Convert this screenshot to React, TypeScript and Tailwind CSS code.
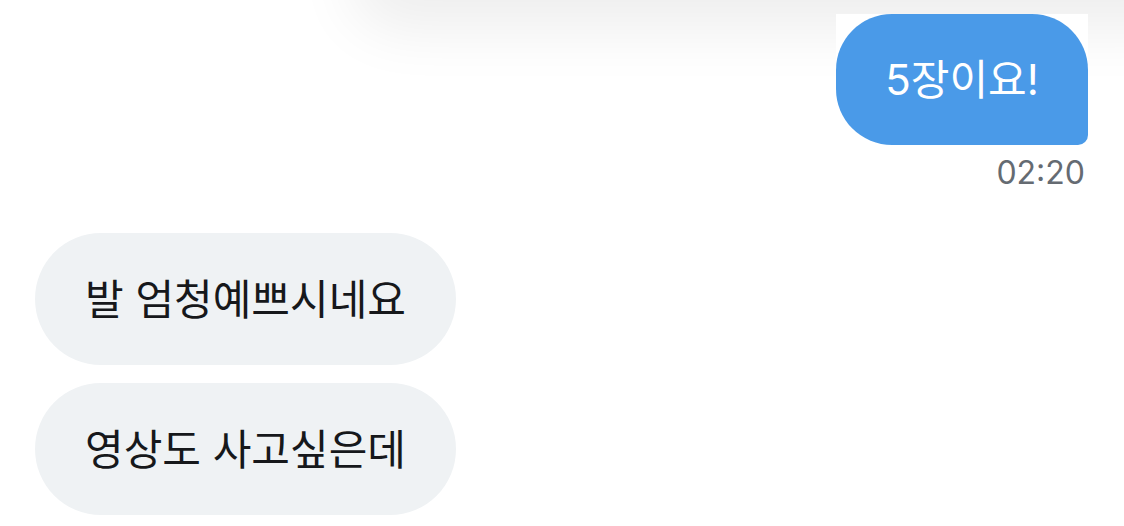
import React from 'react';

const font = { fontFamily: 'Inter, "Noto Sans CJK KR", "Noto Sans", sans-serif' };

const received = ['발 엄청예쁘시네요', '영상도 사고싶은데'];

const App = () => {
  return (
    <div className="relative w-full h-[526px] overflow-hidden bg-white" style={font}>
      {/* header shadow bleeding in from above */}
      <div className="absolute top-[-40px] left-[380px] right-[-60px] h-[40px] rounded-full shadow-[0_0_60px_30px_rgba(0,0,0,0.07)]" />

      <div className="relative flex flex-col">
        <div className="flex justify-end pt-[14px] pr-[36px]">
          <div className="bg-white">
            <div className="flex h-[131px] w-[252px] items-center justify-center rounded-[56px] rounded-br-[10px] bg-[#4a9ae8] text-[42px] text-white">
              5장이요!
            </div>
          </div>
        </div>
        <div className="flex justify-end pr-[39px] pt-[8px] text-[32px] leading-[40px] text-[#656b72]">
          02:20
        </div>

        <div className="flex flex-col items-start gap-[18px] pl-[35px] pt-[40px]">
          {received.map(msg => (
            <div
              key={msg}
              className="flex h-[132px] items-center rounded-full bg-[#eff2f4] pl-[50px] pr-[50px] text-[42px] text-[#16181b]"
            >
              {msg}
            </div>
          ))}
        </div>
      </div>
    </div>
  );
};

export default App;
